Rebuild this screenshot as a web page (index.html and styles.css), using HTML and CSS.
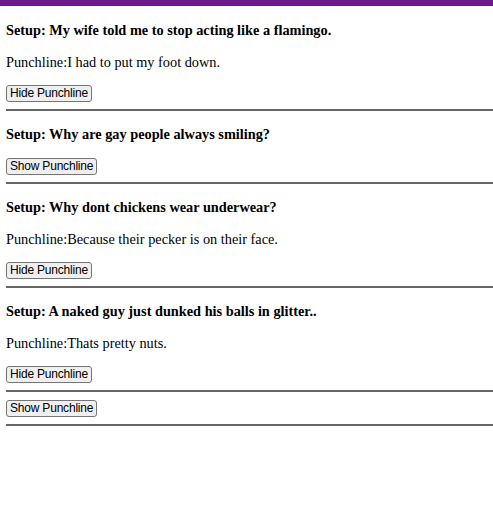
FILE: index.html
```html
<!DOCTYPE html>
<html>
<head>
<meta charset="utf-8">
<link rel="stylesheet" href="styles.css">
</head>
<body>
<div class="topbar"></div>
<div class="jokes">
  <div class="joke">
    <p class="setup">Setup: My wife told me to stop acting like a flamingo.</p>
    <p class="punch">Punchline:I had to put my foot down.</p>
    <button class="btn">Hide Punchline</button>
    <hr class="rule">
  </div>
  <div class="joke">
    <p class="setup">Setup: Why are gay people always smiling?</p>
    <button class="btn">Show Punchline</button>
    <hr class="rule">
  </div>
  <div class="joke">
    <p class="setup">Setup: Why dont chickens wear underwear?</p>
    <p class="punch">Punchline:Because their pecker is on their face.</p>
    <button class="btn">Hide Punchline</button>
    <hr class="rule">
  </div>
  <div class="joke">
    <p class="setup">Setup: A naked guy just dunked his balls in glitter..</p>
    <p class="punch">Punchline:Thats pretty nuts.</p>
    <button class="btn">Hide Punchline</button>
    <hr class="rule">
  </div>
  <div class="joke">
    <button class="btn">Show Punchline</button>
    <hr class="rule">
  </div>
</div>
</body>
</html>
```
FILE: styles.css
```css
html, body {
  margin: 0;
  padding: 0;
  background: #fff;
}
body {
  font-family: "Liberation Serif", "Times New Roman", serif;
  font-size: 14.3px;
  color: #000;
}
.topbar {
  height: 6px;
  background: #6c1a8c;
}
.jokes {
  padding: 1px 0 0 6px;
  overflow: hidden;
}
.setup, .punch {
  margin: 15px 0;
  line-height: 17px;
}
.setup {
  font-weight: bold;
}
.punch {
  line-height: 16px;
}
.btn {
  font-family: "Liberation Sans", Arial, sans-serif;
  font-size: 12px;
  letter-spacing: -0.2px;
  height: 17px;
  line-height: 13px;
  padding: 0 3px;
  margin: 0;
  background: #efefef;
  border: 1px solid #767676;
  border-radius: 3px;
  color: #000;
  display: block;
}
.rule {
  margin: 7px 0 8px;
  border: none;
  border-top: 2px solid #666;
  height: 0;
}
```
